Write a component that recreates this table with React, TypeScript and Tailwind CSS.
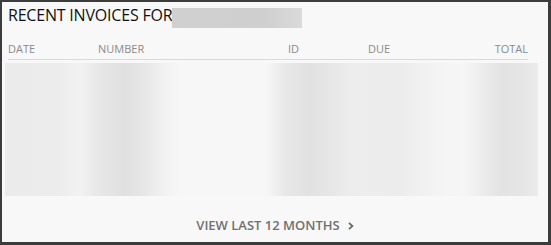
import React from 'react';

// placeholder bands for the hidden rows (values are masked)
const maskGradient =
  'bg-[linear-gradient(90deg,#ebebeb_0%,#ececec_10%,#f2f2f2_14%,#e6e6e6_18%,#e0e0e0_22.5%,#e6e6e6_26%,#f4f4f4_31%,#f7f7f7_33%,#f7f7f7_49%,#e8e8e8_52.5%,#e1e1e1_57%,#e8e8e8_62%,#ededed_65%,#ececec_74%,#f4f4f4_81.6%,#f6f6f6_86%,#e3e3e3_93%,#e5e5e5_96.6%,#ebebeb_100%)]';

const columns = ['DATE', 'NUMBER', 'ID', 'DUE'];

export default function App() {
  return (
    <div
      className="w-[551px] h-[245px] bg-[#3c3c3c] pt-[2px] pl-[2px] pr-[3px] pb-[3px]"
      style={{ fontFamily: '"Open Sans", "Noto Sans", sans-serif' }}
    >
      <div className="h-full bg-[#f8f8f8] flex flex-col pt-[2px]">
        {/* title */}
        <div className="flex items-start pl-[6px]">
          <h2 className="text-[16px] leading-[22px] text-[#111] tracking-[-0.2px]">RECENT INVOICES FOR</h2>
          <div className="mt-[4px] w-[130px] h-[20px] bg-[linear-gradient(90deg,#d0d0d0,#cfcfcf_70%,#dadada)]" />
        </div>

        {/* table header */}
        <div className="mt-[13px] ml-[6px] mr-[20px] grid grid-cols-[90px_190px_80px_1fr_auto] border-b border-[#d9d9d9] pb-[3px] text-[11px] leading-[15px] text-[#8a8a8a]">
          {columns.map((c) => (
            <div key={c}>{c}</div>
          ))}
          <div className="text-right">TOTAL</div>
        </div>

        {/* rows */}
        <div className={`mt-[3px] ml-[3px] mr-[10px] h-[133px] ${maskGradient}`} />

        {/* footer link */}
        <div className="mt-[21px] flex justify-center items-center gap-[8px] text-[13px] leading-[16px] font-semibold text-[#707070]">
          <span>VIEW LAST 12 MONTHS</span>
          <svg width="6" height="8" viewBox="0 0 6 8" className="mt-[1px]">
            <path d="M1 0.8 L4.4 4 L1 7.2" fill="none" stroke="#6a6a6a" strokeWidth="1.8" />
          </svg>
        </div>
      </div>
    </div>
  );
}
